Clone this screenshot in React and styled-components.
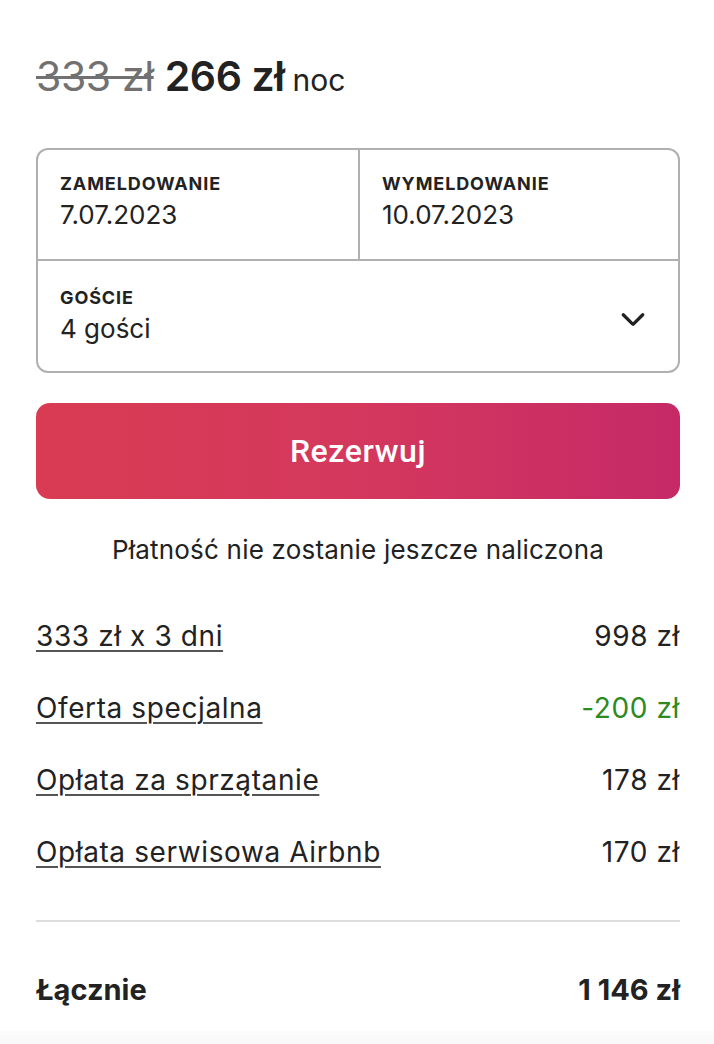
import React from 'react';
import styled, { createGlobalStyle } from 'styled-components';

const GlobalStyle = createGlobalStyle`
  html, body {
    margin: 0;
    padding: 0;
    background: #ffffff;
  }
  body {
    font-family: 'Inter', 'Noto Sans', sans-serif;
    color: #222222;
  }
`;

const fees = [
  { label: '333 zł x 3 dni', value: '998 zł' },
  { label: 'Oferta specjalna', value: '-200 zł', discount: true },
  { label: 'Opłata za sprzątanie', value: '178 zł' },
  { label: 'Opłata serwisowa Airbnb', value: '170 zł' },
];

const App = () => {
  return (
    <>
      <GlobalStyle />
      <Wrapper>
        <PriceRow>
          <OldPrice>333 zł</OldPrice>
          <NewPrice>266 zł</NewPrice>
          <Per>noc</Per>
        </PriceRow>

        <Picker>
          <Cell>
            <Label>Zameldowanie</Label>
            <Value>7.07.2023</Value>
          </Cell>
          <Cell $divider>
            <Label>Wymeldowanie</Label>
            <Value>10.07.2023</Value>
          </Cell>
          <GuestCell>
            <div>
              <Label>Goście</Label>
              <Value>4 gości</Value>
            </div>
            <svg width='26' height='26' viewBox='0 0 32 32' fill='none'>
              <path
                d='M28 12 16.7 23.3a1 1 0 0 1-1.4 0L4 12'
                stroke='#222'
                strokeWidth='4'
                strokeLinecap='round'
                strokeLinejoin='round'
              />
            </svg>
          </GuestCell>
        </Picker>

        <ReserveButton>Rezerwuj</ReserveButton>
        <Note>Płatność nie zostanie jeszcze naliczona</Note>

        <Fees>
          {fees.map((fee) => (
            <FeeRow key={fee.label}>
              <FeeLabel>{fee.label}</FeeLabel>
              <FeeValue $discount={fee.discount}>{fee.value}</FeeValue>
            </FeeRow>
          ))}
        </Fees>

        <Divider />

        <TotalRow>
          <span>Łącznie</span>
          <span>1 146 zł</span>
        </TotalRow>
      </Wrapper>
      <Footer />
    </>
  );
};

export default App;

const Wrapper = styled.div`
  padding: 52px 34px 0 36px;
`;

const PriceRow = styled.div`
  display: flex;
  align-items: baseline;
  gap: 11px;
  line-height: 48px;
`;

const OldPrice = styled.span`
  font-size: 41px;
  color: #717171;
  text-decoration: line-through;
  text-decoration-thickness: 3px;
  letter-spacing: -0.4px;
`;

const NewPrice = styled.span`
  font-size: 41px;
  font-weight: 600;
  color: #222;
  letter-spacing: -0.4px;
`;

const Per = styled.span`
  font-size: 30px;
  color: #222;
  margin-left: -3px;
`;

const Picker = styled.div`
  margin-top: 44px;
  display: grid;
  grid-template-columns: 1fr 1fr;
  border: 2px solid #b0b0b0;
  border-radius: 12px;
  overflow: hidden;
`;

const Cell = styled.div`
  height: 111px;
  box-sizing: border-box;
  padding: 22px 22px 0 22px;
  border-bottom: 2px solid #b0b0b0;
  border-left: ${(p) => (p.$divider ? '2px solid #b0b0b0' : 'none')};
`;

const GuestCell = styled.div`
  grid-column: 1 / span 2;
  height: 110px;
  box-sizing: border-box;
  padding: 0 32px 0 22px;
  display: flex;
  justify-content: space-between;
  align-items: center;
  svg {
    margin-top: 4px;
  }
`;

const Label = styled.div`
  font-size: 18px;
  font-weight: 700;
  text-transform: uppercase;
  letter-spacing: 0.9px;
  line-height: 24px;
  color: #222;
`;

const Value = styled.div`
  font-size: 26px;
  line-height: 34px;
  margin-top: 2px;
  color: #222;
`;

const ReserveButton = styled.button`
  display: block;
  width: 100%;
  margin-top: 30px;
  height: 96px;
  border: none;
  border-radius: 14px;
  background: linear-gradient(90deg, #d83b52 0%, #d4385d 50%, #c52a67 100%);
  color: #ffffff;
  font-family: 'Roboto', 'Noto Sans', sans-serif;
  font-size: 32px;
  font-weight: 500;
  letter-spacing: 0.6px;
  cursor: pointer;
`;

const Note = styled.p`
  margin: 37px 0 0;
  text-align: center;
  font-size: 26px;
  letter-spacing: 0.2px;
  line-height: 28px;
  color: #222;
`;

const Fees = styled.div`
  margin-top: 56px;
  display: flex;
  flex-direction: column;
  gap: 40px;
`;

const FeeRow = styled.div`
  display: flex;
  justify-content: space-between;
  align-items: center;
  font-size: 28px;
  letter-spacing: 0.6px;
  line-height: 32px;
`;

const FeeLabel = styled.span`
  text-decoration: underline;
  text-decoration-thickness: 1.5px;
  text-decoration-color: #555;
  text-underline-offset: 4px;
  color: #222;
`;

const FeeValue = styled.span`
  color: ${(p) => (p.$discount ? '#2d8a1f' : '#222')};
`;

const Divider = styled.hr`
  margin: 52px 0 0;
  border: none;
  border-top: 2px solid #dddddd;
`;

const TotalRow = styled.div`
  margin-top: 52px;
  display: flex;
  justify-content: space-between;
  font-size: 29px;
  font-weight: 700;
  line-height: 32px;
`;

const Footer = styled.div`
  margin-top: 25px;
  height: 20px;
  background: linear-gradient(180deg, #fbfbfb, #f7f7f7);
`;
